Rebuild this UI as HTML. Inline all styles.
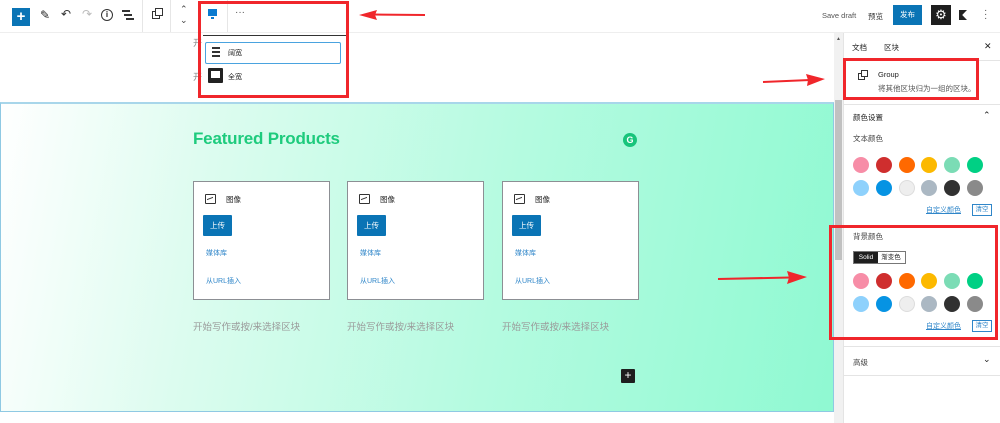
<!DOCTYPE html><html><head><meta charset="utf-8"><style>
*{margin:0;padding:0;box-sizing:border-box}
body{width:1000px;height:423px;overflow:hidden;background:#fff;font-family:"Liberation Sans","Noto Sans CJK SC",sans-serif;font-size:8px;color:#1e1e1e;position:relative}
.a{position:absolute}
.c{position:absolute;width:16px;height:16px;border-radius:50%}
.red{position:absolute;border:3px solid #f0262b}
.card{position:absolute;top:181px;width:137px;height:119px;background:#fff;border:1px solid #8c8f94}
.card .t{position:absolute;left:32px;top:12px;font-size:7.5px}
.card .ic{position:absolute;left:11px;top:12px;width:11px;height:10px;border:1.3px solid #333;border-radius:1px}
.card .ic:after{content:"";position:absolute;left:1px;top:3px;width:6px;height:3px;border-top:1px solid #333;transform:skewY(-20deg)}
.card .b{position:absolute;left:9px;top:33px;width:29px;height:21px;background:#0a74b5;color:#fff;font-size:7.5px;text-align:center;line-height:21px;border-radius:1px}
.card .l1{position:absolute;left:12px;top:66px;color:#2f86c9;font-size:7px}
.card .l2{position:absolute;left:12px;top:94px;color:#2f86c9;font-size:7px}
.ph{position:absolute;top:319px;color:#9a9a9a;font-size:9.5px}
</style></head><body>
<div class="a" style="left:0;top:32px;width:1000px;height:1px;background:#eee"></div>
<div class="a" style="left:12px;top:8px;width:18px;height:18px;background:#0a74b5;color:#fff;font-size:15px;line-height:17px;text-align:center;font-weight:bold">+</div>
<div class="a" style="left:40px;top:8px;font-size:12px">✎</div>
<div class="a" style="left:61px;top:7px;font-size:12px;color:#333">↶</div>
<div class="a" style="left:82px;top:7px;font-size:12px;color:#bbb">↷</div>
<div class="a" style="left:101px;top:9px;width:12px;height:12px;border:1.5px solid #333;border-radius:50%;font-size:8px;text-align:center;line-height:9px;font-weight:bold">i</div>
<div class="a" style="left:122px;top:10px;width:8px;height:1.5px;background:#333;box-shadow:2px 4px 0 #333,4px 8px 0 #333"></div>
<div class="a" style="left:142px;top:0;width:1px;height:32px;background:#e6e6e6"></div>
<div class="a" style="left:152px;top:11px;width:8px;height:8px;border:1.3px solid #333"></div>
<div class="a" style="left:155px;top:8px;width:8px;height:8px;border:1.3px solid #333;background:#fff"></div>
<div class="a" style="left:170px;top:0;width:1px;height:32px;background:#e6e6e6"></div>
<div class="a" style="left:180px;top:4px;font-size:9px;line-height:11px;color:#444">⌃<br>⌄</div>
<div class="a" style="left:227px;top:0;width:1px;height:32px;background:#e6e6e6"></div>
<div class="a" style="left:208px;top:9px;width:9px;height:7px;background:#0a7bd0"></div>
<div class="a" style="left:211px;top:17px;width:3px;height:2px;background:#0a7bd0"></div>
<div class="a" style="left:235px;top:7px;font-size:10px;color:#555">···</div>
<div class="a" style="left:203px;top:35px;width:143px;height:1px;background:#333"></div>
<div class="a" style="left:205px;top:42px;width:136px;height:22px;border:1px solid #4aa3df;border-radius:2px"></div>
<div class="a" style="left:212px;top:47px;width:8px;height:10px;border-top:2px solid #333;border-bottom:2px solid #333"><div style="margin-top:2px;height:2px;background:#333"></div></div>
<div class="a" style="left:228px;top:48px;font-size:7px">阔宽</div>
<div class="a" style="left:208px;top:68px;width:15px;height:15px;background:#222;border-radius:1px"><div style="margin:3px;height:7px;background:#fff"></div></div>
<div class="a" style="left:228px;top:72px;font-size:7px">全宽</div>
<div class="a" style="left:193px;top:36px;font-size:9px;color:#888">开</div>
<div class="a" style="left:193px;top:70px;font-size:9px;color:#888">开</div>
<div class="red" style="left:198px;top:1px;width:151px;height:97px"></div>
<svg class="a" style="left:355px;top:8px" width="75" height="14"><path d="M70 7 L18 6.5" stroke="#f0262b" stroke-width="2"/><path d="M4 7 L22 2 L20 7 L22 12Z" fill="#f0262b"/></svg>
<div class="a" style="left:822px;top:11px;font-size:7.5px;color:#555">Save draft</div>
<div class="a" style="left:868px;top:11px;font-size:7.5px;color:#333">预览</div>
<div class="a" style="left:893px;top:5px;width:29px;height:20px;background:#0a74b5;color:#fff;font-size:7.5px;text-align:center;line-height:20px">发布</div>
<div class="a" style="left:931px;top:5px;width:20px;height:20px;background:#1e1e1e;color:#fff;font-size:13px;text-align:center;line-height:20px">⚙</div>
<div class="a" style="left:959px;top:10px;width:8px;height:10px;background:#222;clip-path:polygon(0 0,100% 0,40% 50%,100% 100%,0 100%)"></div>
<div class="a" style="left:984px;top:9px;font-size:10px;line-height:4px;color:#555">·<br>·<br>·</div>
<div class="a" style="left:0;top:102px;width:834px;height:310px;border:1px solid #8fc9e3;border-top:2px solid #a8d6ea;background:linear-gradient(100deg,#ffffff 0%,#dcfcef 25%,#b4fbe0 60%,#8ff9d2 100%)"></div>
<div class="a" style="left:193px;top:129px;font-size:17px;font-weight:bold;color:#1ecb7d;letter-spacing:-.2px">Featured Products</div>
<div class="a" style="left:623px;top:133px;width:14px;height:14px;border-radius:50%;background:#17c47b;color:#fff;font-size:9px;font-weight:bold;text-align:center;line-height:14px">G</div>
<div class="card" style="left:193px"><div class="ic"></div><div class="t">图像</div><div class="b">上传</div><div class="l1">媒体库</div><div class="l2">从URL插入</div></div>
<div class="card" style="left:347px"><div class="ic"></div><div class="t">图像</div><div class="b">上传</div><div class="l1">媒体库</div><div class="l2">从URL插入</div></div>
<div class="card" style="left:502px"><div class="ic"></div><div class="t">图像</div><div class="b">上传</div><div class="l1">媒体库</div><div class="l2">从URL插入</div></div>
<div class="ph" style="left:193px">开始写作或按/来选择区块</div>
<div class="ph" style="left:347px">开始写作或按/来选择区块</div>
<div class="ph" style="left:502px">开始写作或按/来选择区块</div>
<div class="a" style="left:621px;top:369px;width:14px;height:14px;background:#1e1e1e;color:#fff;font-size:12px;text-align:center;line-height:13px;border-radius:1px">+</div>
<svg class="a" style="left:760px;top:70px" width="70" height="20"><path d="M3 12 L50 10" stroke="#f0262b" stroke-width="2"/><path d="M65 9 L46 4 L48 10 L47 16Z" fill="#f0262b"/></svg>
<svg class="a" style="left:715px;top:268px" width="95" height="20"><path d="M3 11 L75 9.5" stroke="#f0262b" stroke-width="2"/><path d="M92 9 L72 3 L74 9.5 L72 16Z" fill="#f0262b"/></svg>
<div class="a" style="left:834px;top:33px;width:9px;height:390px;background:#f1f1f1"></div>
<div class="a" style="left:835px;top:100px;width:7px;height:160px;background:#c1c1c1"></div>
<div class="a" style="left:836px;top:36px;font-size:5px;color:#555">▲</div>
<div class="a" style="left:843px;top:33px;width:1px;height:390px;background:#e4e4e4"></div>
<div class="a" style="left:852px;top:42px;font-size:7.5px">文档</div>
<div class="a" style="left:884px;top:42px;font-size:7.5px">区块</div>
<div class="a" style="left:984px;top:41px;font-size:9px">✕</div>
<div class="a" style="left:844px;top:60px;width:156px;height:1px;background:#e4e4e4"></div>
<div class="a" style="left:858px;top:73px;width:7px;height:7px;border:1.2px solid #333"></div>
<div class="a" style="left:861px;top:70px;width:7px;height:7px;border:1.2px solid #333;background:#fff"></div>
<div class="a" style="left:878px;top:70px;font-size:7.5px">Group</div>
<div class="a" style="left:878px;top:83px;font-size:7.5px;color:#555">将其他区块归为一组的区块。</div>
<div class="red" style="left:843px;top:58px;width:136px;height:42px"></div>
<div class="a" style="left:844px;top:104px;width:156px;height:1px;background:#e4e4e4"></div>
<div class="a" style="left:853px;top:112px;font-size:7.5px">颜色设置</div>
<div class="a" style="left:983px;top:110px;font-size:9px">⌃</div>
<div class="a" style="left:853px;top:133px;font-size:7.5px;color:#444">文本颜色</div>
<div class="c" style="left:853px;top:157px;background:#f78da7"></div><div class="c" style="left:876px;top:157px;background:#cf2e2e"></div><div class="c" style="left:899px;top:157px;background:#ff6900"></div><div class="c" style="left:921px;top:157px;background:#fcb900"></div><div class="c" style="left:944px;top:157px;background:#7bdcb5"></div><div class="c" style="left:967px;top:157px;background:#00d084"></div>
<div class="c" style="left:853px;top:180px;background:#8ed1fc"></div><div class="c" style="left:876px;top:180px;background:#0693e3"></div><div class="c" style="left:899px;top:180px;background:#eee;border:1px solid #ddd"></div><div class="c" style="left:921px;top:180px;background:#abb8c3"></div><div class="c" style="left:944px;top:180px;background:#313131"></div><div class="c" style="left:967px;top:180px;background:#8a8a8a"></div>
<div class="a" style="left:926px;top:205px;font-size:7px;color:#2f86c9;text-decoration:underline">自定义颜色</div>
<div class="a" style="left:972px;top:204px;width:20px;height:12px;border:1px solid #2f86c9;font-size:6.5px;color:#2f86c9;text-align:center;line-height:10px">清空</div>
<div class="a" style="left:853px;top:231px;font-size:7.5px;color:#444">背景颜色</div>
<div class="a" style="left:853px;top:251px;width:53px;height:13px;border:1px solid #777;font-size:6.5px"><span style="display:inline-block;width:24px;height:11px;background:#1e1e1e;color:#fff;text-align:center;line-height:11px">Solid</span><span style="display:inline-block;width:26px;text-align:center;line-height:11px">渐变色</span></div>
<div class="c" style="left:853px;top:273px;background:#f78da7"></div><div class="c" style="left:876px;top:273px;background:#cf2e2e"></div><div class="c" style="left:899px;top:273px;background:#ff6900"></div><div class="c" style="left:921px;top:273px;background:#fcb900"></div><div class="c" style="left:944px;top:273px;background:#7bdcb5"></div><div class="c" style="left:967px;top:273px;background:#00d084"></div>
<div class="c" style="left:853px;top:296px;background:#8ed1fc"></div><div class="c" style="left:876px;top:296px;background:#0693e3"></div><div class="c" style="left:899px;top:296px;background:#eee;border:1px solid #ddd"></div><div class="c" style="left:921px;top:296px;background:#abb8c3"></div><div class="c" style="left:944px;top:296px;background:#313131"></div><div class="c" style="left:967px;top:296px;background:#8a8a8a"></div>
<div class="a" style="left:926px;top:321px;font-size:7px;color:#2f86c9;text-decoration:underline">自定义颜色</div>
<div class="a" style="left:972px;top:320px;width:20px;height:12px;border:1px solid #2f86c9;font-size:6.5px;color:#2f86c9;text-align:center;line-height:10px">清空</div>
<div class="red" style="left:829px;top:225px;width:169px;height:115px"></div>
<div class="a" style="left:844px;top:346px;width:156px;height:1px;background:#e4e4e4"></div>
<div class="a" style="left:853px;top:357px;font-size:7.5px;color:#444">高级</div>
<div class="a" style="left:983px;top:354px;font-size:9px">⌄</div>
<div class="a" style="left:844px;top:375px;width:156px;height:1px;background:#e4e4e4"></div>
</body></html>
